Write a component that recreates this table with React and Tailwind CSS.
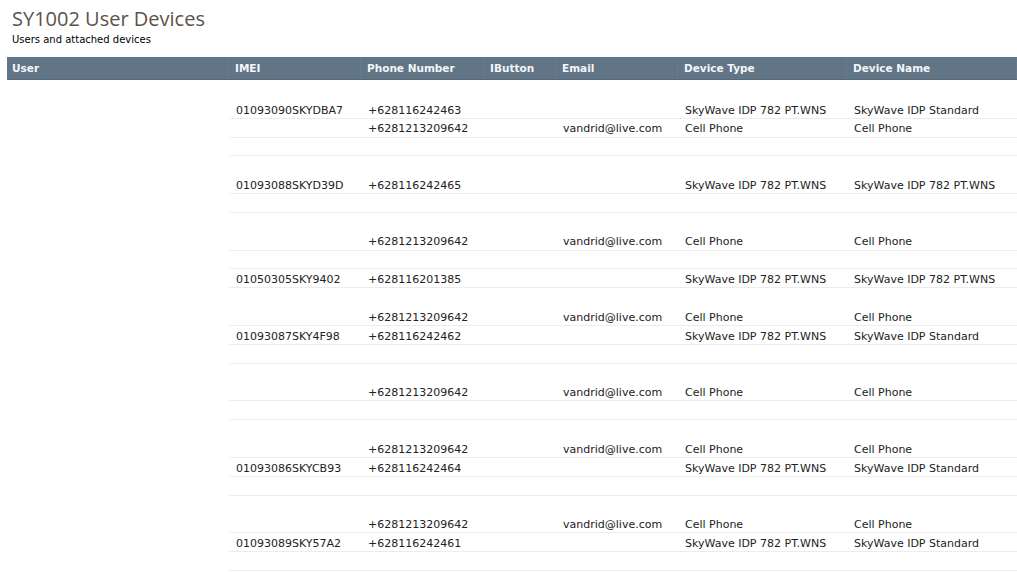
const COLS = [
  { key: 'imei', label: 'IMEI', w: 'w-[132px]' },
  { key: 'phone', label: 'Phone Number', w: 'w-[123px]' },
  { key: 'ibutton', label: 'IButton', w: 'w-[72px]' },
  { key: 'email', label: 'Email', w: 'w-[122px]' },
  { key: 'type', label: 'Device Type', w: 'w-[169px]' },
  { key: 'name', label: 'Device Name', w: 'flex-1' },
];

const CELL = { phone: '+6281213209642', email: 'vandrid@live.com', type: 'Cell Phone', name: 'Cell Phone' };
const sky = (imei, phone, name) => ({ imei, phone, type: 'SkyWave IDP 782 PT.WNS', name });
const STD = 'SkyWave IDP Standard';
const WNS = 'SkyWave IDP 782 PT.WNS';

// each entry: [row data, has bottom rule]
const ROWS = [
  [{}, false],
  [sky('01093090SKYDBA7', '+628116242463', STD), true],
  [CELL, true],
  [{}, true],
  [{}, false],
  [sky('01093088SKYD39D', '+628116242465', WNS), true],
  [{}, true],
  [{}, false],
  [CELL, true],
  [{}, true],
  [sky('01050305SKY9402', '+628116201385', WNS), true],
  [{}, false],
  [CELL, true],
  [sky('01093087SKY4F98', '+628116242462', STD), true],
  [{}, true],
  [{}, false],
  [CELL, true],
  [{}, true],
  [{}, false],
  [CELL, true],
  [sky('01093086SKYCB93', '+628116242464', STD), true],
  [{}, true],
  [{}, false],
  [CELL, true],
  [sky('01093089SKY57A2', '+628116242461', STD), true],
  [{}, true],
];

export default function App() {
  return (
    <div className="w-[1017px] h-[572px] overflow-hidden bg-white pl-[7px] font-['DejaVu_Sans',Verdana,sans-serif] text-[#222]">
      {/* Title */}
      <div className="pl-[5px] pt-[7px]">
        <h1 className="font-['Open_Sans',sans-serif] text-[20px] leading-[24px] text-[#5b5349]">SY1002 User Devices</h1>
        <p className="mt-[2.5px] text-[10px] leading-[12px] text-black">Users and attached devices</p>
      </div>

      {/* Header */}
      <div className="mt-[11.5px] flex h-[23px] items-stretch border-b border-[#56697a] bg-[#617587] pt-[1px] text-[10.5px] font-bold text-[#f4f6f8]">
        <div className="flex w-[222px] items-center border-r border-[#687b8c] pl-[5px]">User</div>
        {COLS.map(c => (
          <div key={c.key} className={`${c.w} flex items-center border-r border-[#687b8c] pl-[6px]`}>{c.label}</div>
        ))}
      </div>

      {/* Body */}
      <div className="mt-[1px] flex">
        <div className="w-[222px]" />
        <div className="flex-1">
          {ROWS.map(([r, rule], i) => (
            <div
              key={i}
              className={`flex h-[18.85px] items-center text-[11px] ${rule ? 'border-b border-[#ececec]' : ''}`}
            >
              {COLS.map(c => (
                <div key={c.key} className={`${c.w} whitespace-nowrap pl-[7px] pt-[4px]`}>{r[c.key] || ''}</div>
              ))}
            </div>
          ))}
        </div>
      </div>
    </div>
  );
}
